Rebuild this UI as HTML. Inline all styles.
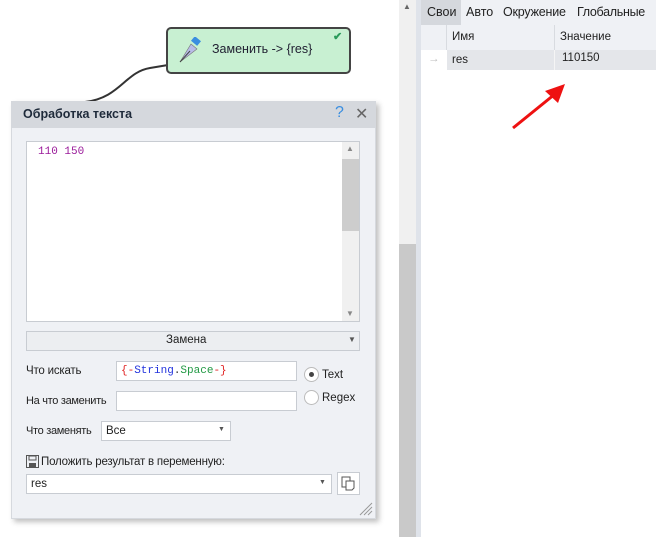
<!DOCTYPE html>
<html><head><meta charset="utf-8"><style>
*{box-sizing:border-box;margin:0;padding:0}
body{width:656px;height:537px;background:#fff;position:relative;overflow:hidden;font-family:"Liberation Sans",sans-serif;font-size:11.5px;color:#222}
.a{position:absolute}
.mono{font-family:"Liberation Mono",monospace}
</style></head><body>
<svg class="a" style="left:0;top:0" width="400" height="110"><path d="M85 102 C120 98 125 72 150 68 L168 65" fill="none" stroke="#333" stroke-width="2"/></svg>
<div class="a" style="left:166px;top:27px;width:185px;height:47px;background:#c8f0d2;border:2px solid #444;border-radius:5px"></div>
<svg class="a" style="left:176px;top:37px" width="28" height="28"><rect x="16" y="1" width="8" height="6" fill="#3a8ee0" transform="rotate(40 20 4)"/><path d="M15 7 L21 12 L4 25 Z" fill="#b8bce8" stroke="#777" stroke-width="0.6"/><path d="M4 25 L14 14" stroke="#444" stroke-width="1"/></svg>
<div class="a" style="left:212px;top:42px;font-size:12.5px;color:#223">Заменить -&gt; {res}</div>
<div class="a" style="left:333px;top:30px;color:#2a9a5a;font-size:11px;font-weight:bold">✔</div>
<div class="a" style="left:11px;top:101px;width:365px;height:418px;background:#eff1f5;box-shadow:3px 3px 5px rgba(0,0,0,.25);border:1px solid #d6d9de"></div>
<div class="a" style="left:11px;top:101px;width:365px;height:27px;background:#d5d8dd"></div>
<div class="a" style="left:23px;top:107px;font-weight:bold;font-size:12.5px;color:#1e2a3a">Обработка текста</div>
<div class="a" style="left:335px;top:104px;font-size:16px;color:#3a8ee0">?</div>
<div class="a" style="left:355px;top:104px;font-size:16px;color:#666">✕</div>
<div class="a" style="left:26px;top:141px;width:334px;height:181px;background:#fff;border:1px solid #c8ccd2"></div>
<div class="a mono" style="left:38px;top:146px;color:#9a1a9a;font-size:11px">110 150</div>
<div class="a" style="left:342px;top:142px;width:17px;height:179px;background:#f0f0f0"></div>
<div class="a" style="left:342px;top:159px;width:17px;height:72px;background:#cdcdcd"></div>
<div class="a" style="left:346px;top:144px;font-size:8px;color:#888">▲</div>
<div class="a" style="left:346px;top:309px;font-size:8px;color:#888">▼</div>
<div class="a" style="left:26px;top:331px;width:334px;height:20px;background:#eceef1;border:1px solid #c8ccd2"></div>
<div class="a" style="left:166px;top:334px">Замена</div>
<div class="a" style="left:348px;top:335px;font-size:8px;color:#555">▼</div>
<div class="a" style="left:26px;top:365px;letter-spacing:-0.2px">Что искать</div>
<div class="a" style="left:116px;top:361px;width:181px;height:20px;background:#fff;border:1px solid #c8ccd2"></div>
<div class="a mono" style="left:121px;top:365px;font-size:11px"><span style="color:#e02020">{-</span><span style="color:#2233dd">String</span><span style="color:#333">.</span><span style="color:#229944">Space</span><span style="color:#e02020">-}</span></div>
<div class="a" style="left:304px;top:367px;width:15px;height:15px;border-radius:50%;background:#fff;border:1px solid #bbb"></div>
<div class="a" style="left:309px;top:372px;width:5px;height:5px;border-radius:50%;background:#444"></div>
<div class="a" style="left:322px;top:369px">Text</div>
<div class="a" style="left:304px;top:390px;width:15px;height:15px;border-radius:50%;background:#fff;border:1px solid #bbb"></div>
<div class="a" style="left:322px;top:392px">Regex</div>
<div class="a" style="left:26px;top:395px;letter-spacing:-0.3px;font-size:11px">На что заменить</div>
<div class="a" style="left:116px;top:391px;width:181px;height:20px;background:#fff;border:1px solid #c8ccd2"></div>
<div class="a" style="left:26px;top:425px;letter-spacing:-0.3px;font-size:11px">Что заменять</div>
<div class="a" style="left:101px;top:421px;width:130px;height:20px;background:#fff;border:1px solid #c8ccd2"></div>
<div class="a" style="left:106px;top:425px">Все</div>
<div class="a" style="left:218px;top:426px;font-size:7px;color:#555">▼</div>
<svg class="a" style="left:26px;top:455px" width="13" height="13"><rect x="0.5" y="0.5" width="12" height="12" fill="none" stroke="#555"/><rect x="3" y="1" width="7" height="4" fill="none" stroke="#555"/><rect x="3" y="8" width="7" height="4" fill="#555"/></svg>
<div class="a" style="left:41px;top:456px;letter-spacing:-0.2px">Положить результат в переменную:</div>
<div class="a" style="left:26px;top:474px;width:306px;height:20px;background:#fff;border:1px solid #c8ccd2"></div>
<div class="a" style="left:31px;top:478px">res</div>
<div class="a" style="left:319px;top:479px;font-size:7px;color:#555">▼</div>
<div class="a" style="left:337px;top:472px;width:23px;height:23px;background:#fff;border:1px solid #c8ccd2"></div>
<svg class="a" style="left:341px;top:476px" width="15" height="15"><rect x="1" y="1" width="8" height="10" fill="#fff" stroke="#555"/><path d="M5 5 H13 V12 L11 14 H5 Z" fill="#fff" stroke="#555"/></svg>
<svg class="a" style="left:358px;top:501px" width="16" height="16"><path d="M2 14 L14 2 M6 14 L14 6 M10 14 L14 10" stroke="#999" stroke-width="1"/></svg>
<div class="a" style="left:399px;top:0;width:17px;height:537px;background:#f0f0f0"></div>
<div class="a" style="left:399px;top:244px;width:17px;height:293px;background:#c9c9c9"></div>
<div class="a" style="left:403px;top:2px;font-size:8px;color:#666">▲</div>
<div class="a" style="left:416px;top:0;width:5px;height:537px;background:#dfe3ea"></div>
<div class="a" style="left:421px;top:0;width:235px;height:50px;background:#eff1f5"></div>
<div class="a" style="left:421px;top:0;width:40px;height:25px;background:#d5d8dd"></div>
<div class="a" style="left:427px;top:5px;font-size:12.5px">Свои</div>
<div class="a" style="left:466px;top:5px;font-size:12.5px">Авто</div>
<div class="a" style="left:503px;top:5px;font-size:12.5px;letter-spacing:-0.2px">Окружение</div>
<div class="a" style="left:577px;top:5px;font-size:12.5px;letter-spacing:-0.3px">Глобальные</div>
<div class="a" style="left:446px;top:25px;width:1px;height:25px;background:#d8dbe0"></div>
<div class="a" style="left:554px;top:25px;width:1px;height:45px;background:#d8dbe0"></div>
<div class="a" style="left:452px;top:31px;font-size:11.5px">Имя</div>
<div class="a" style="left:560px;top:31px;font-size:11.5px">Значение</div>
<div class="a" style="left:447px;top:50px;width:209px;height:20px;background:#e4e6ea"></div>
<div class="a" style="left:554px;top:50px;width:1px;height:20px;background:#f5f5f5"></div>
<div class="a" style="left:428px;top:53px;color:#bbb">→</div>
<div class="a" style="left:452px;top:54px">res</div>
<div class="a" style="left:562px;top:52px">110150</div>
<svg class="a" style="left:505px;top:78px" width="70" height="55"><path d="M8 50 L50 16" stroke="#ee1111" stroke-width="3"/><path d="M60 6 L40 13 L53 25 Z" fill="#ee1111"/></svg>
</body></html>
